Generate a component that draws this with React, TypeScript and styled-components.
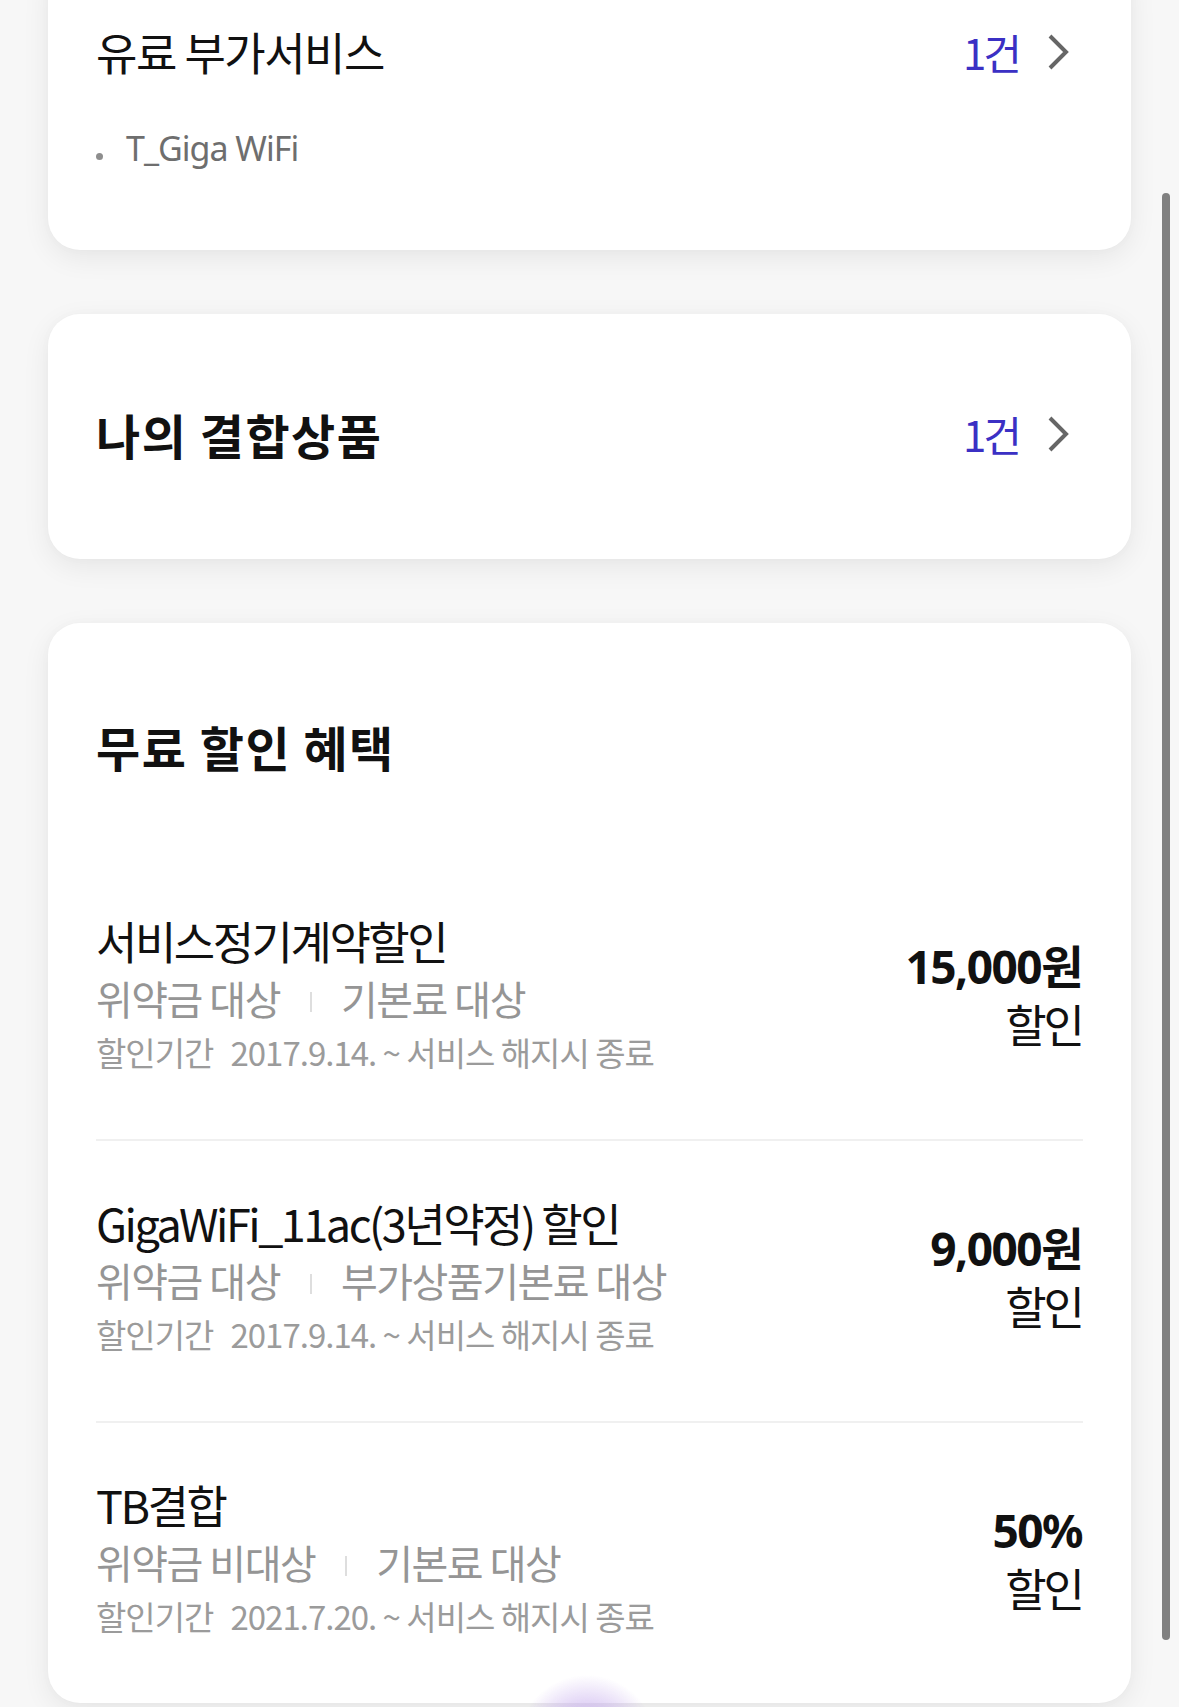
import React from "react";
import styled, { createGlobalStyle } from "styled-components";

const KR = `"Noto Sans CJK KR", "Noto Sans", sans-serif`;
const LATIN = `"Noto Sans", "Noto Sans CJK KR", sans-serif`;

const GlobalStyle = createGlobalStyle`
  html, body {
    margin: 0;
    padding: 0;
    background: #f7f7f7;
    overflow: hidden;
  }
  body {
    height: 1707px;
    font-family: ${KR};
    color: #111;
  }
`;

const Page = styled.main`
  display: flex;
  flex-direction: column;
  gap: 64px;
  padding: 0 48px;
  margin-top: -40px;
`;

const Card = styled.section`
  background: #fff;
  border-radius: 32px;
  box-shadow: 0 8px 28px rgba(0, 0, 0, 0.07), 0 0 12px rgba(0, 0, 0, 0.02);
  padding: 0 48px;
`;

const ServiceCard = styled(Card)`
  padding: 60px 48px 80px;
`;

const LinkCard = styled(Card)`
  height: 245px;
  box-sizing: border-box;
  padding-bottom: 6px;
  display: flex;
  align-items: center;
`;

const HeaderRow = styled.div`
  display: flex;
  align-items: center;
  justify-content: space-between;
  width: 100%;
`;

const Title = styled.h2<{ $bold?: boolean }>`
  margin: 0;
  font-family: ${KR};
  font-size: ${(p) => (p.$bold ? "48px" : "45px")};
  font-weight: ${(p) => (p.$bold ? 700 : 400)};
  letter-spacing: ${(p) => (p.$bold ? "1.5px" : "-1.5px")};
  line-height: ${(p) => (p.$bold ? "46px" : "64px")};
  color: #111;
`;

const CountLink = styled.a`
  display: flex;
  align-items: center;
  gap: 28px;
  margin-right: 14px;
  text-decoration: none;
`;

const Count = styled.span`
  font-size: 42px;
  letter-spacing: -3px;
  line-height: 64px;
  color: #3b30c4;
`;

const List = styled.ul`
  list-style: none;
  margin: 42px 0 0;
  padding: 0;
`;

const ListItem = styled.li`
  display: flex;
  align-items: center;
  font-family: ${LATIN};
  font-size: 34px;
  letter-spacing: -1px;
  line-height: 44px;
  color: #6e6e6e;
`;

const Dot = styled.span`
  width: 7px;
  height: 7px;
  border-radius: 50%;
  background: #8e8e8e;
  margin: 16px 23px 0 0;
`;

const BenefitHeader = styled.div`
  padding: 100px 0 90px;
`;

const Row = styled.div`
  box-sizing: border-box;
  height: 282px;
  padding-bottom: 8px;
  display: flex;
  align-items: center;
  justify-content: space-between;
  border-bottom: 2px solid #f0f0f0;
  &:last-child {
    border-bottom: none;
    height: 280px;
  }
`;

const Info = styled.div`
  display: flex;
  flex-direction: column;
`;

const RowTitle = styled.div`
  font-size: 45px;
  letter-spacing: -2.5px;
  line-height: 58px;
  color: #111;
`;

const Tags = styled.div`
  display: flex;
  align-items: center;
  font-size: 40px;
  letter-spacing: -1.5px;
  line-height: 56px;
  color: #959595;
`;

const TagDivider = styled.span`
  width: 2px;
  height: 20px;
  background: #dedede;
  margin: 8px 29px 0 30px;
`;

const Period = styled.div`
  font-size: 33px;
  letter-spacing: -1px;
  line-height: 52px;
  color: #9b9b9b;
`;

const PeriodLabel = styled.span`
  margin-right: 17px;
`;

const Amount = styled.div`
  display: flex;
  flex-direction: column;
  align-items: flex-end;
  margin-right: 1px;
`;

const AmountValue = styled.div`
  font-family: ${LATIN};
  font-size: 46px;
  font-weight: 700;
  letter-spacing: -1.5px;
  line-height: 58px;
  color: #111;
`;

const AmountUnit = styled.div`
  font-size: 45px;
  letter-spacing: -3px;
  line-height: 58px;
  color: #111;
`;

const ScrollThumb = styled.div`
  position: fixed;
  top: 193px;
  right: 9px;
  width: 8px;
  height: 1447px;
  border-radius: 4px;
  background: #808080;
`;

const Glow = styled.div`
  position: fixed;
  left: 497px;
  top: 1655px;
  width: 180px;
  height: 180px;
  border-radius: 50%;
  background: radial-gradient(
    circle,
    rgba(190, 160, 235, 0.95) 0%,
    rgba(200, 175, 238, 0.6) 30%,
    rgba(220, 205, 245, 0) 55%
  );
  pointer-events: none;
`;

const Chevron = () => (
  <svg width="22" height="36" viewBox="0 0 22 36" aria-hidden="true">
    <polyline
      points="3,2 19,18 3,34"
      fill="none"
      stroke="#666"
      strokeWidth="4"
      strokeLinejoin="miter"
    />
  </svg>
);

type Benefit = {
  title: string;
  penalty: string;
  base: string;
  period: string;
  value: string;
};

const benefits: Benefit[] = [
  {
    title: "서비스정기계약할인",
    penalty: "위약금 대상",
    base: "기본료 대상",
    period: "2017.9.14. ~ 서비스 해지시 종료",
    value: "15,000원",
  },
  {
    title: "GigaWiFi_11ac(3년약정) 할인",
    penalty: "위약금 대상",
    base: "부가상품기본료 대상",
    period: "2017.9.14. ~ 서비스 해지시 종료",
    value: "9,000원",
  },
  {
    title: "TB결합",
    penalty: "위약금 비대상",
    base: "기본료 대상",
    period: "2021.7.20. ~ 서비스 해지시 종료",
    value: "50%",
  },
];

export default function App() {
  return (
    <>
      <GlobalStyle />
      <Page>
        <ServiceCard>
          <HeaderRow>
            <Title>유료 부가서비스</Title>
            <CountLink>
              <Count>1건</Count>
              <Chevron />
            </CountLink>
          </HeaderRow>
          <List>
            <ListItem>
              <Dot />
              T_Giga WiFi
            </ListItem>
          </List>
        </ServiceCard>

        <LinkCard>
          <HeaderRow>
            <Title $bold>나의 결합상품</Title>
            <CountLink>
              <Count>1건</Count>
              <Chevron />
            </CountLink>
          </HeaderRow>
        </LinkCard>

        <Card>
          <BenefitHeader>
            <Title $bold>무료 할인 혜택</Title>
          </BenefitHeader>
          {benefits.map((b) => (
            <Row key={b.title}>
              <Info>
                <RowTitle>{b.title}</RowTitle>
                <Tags>
                  <span>{b.penalty}</span>
                  <TagDivider />
                  <span>{b.base}</span>
                </Tags>
                <Period>
                  <PeriodLabel>할인기간</PeriodLabel>
                  {b.period}
                </Period>
              </Info>
              <Amount>
                <AmountValue>{b.value}</AmountValue>
                <AmountUnit>할인</AmountUnit>
              </Amount>
            </Row>
          ))}
        </Card>
      </Page>
      <ScrollThumb />
      <Glow />
    </>
  );
}
